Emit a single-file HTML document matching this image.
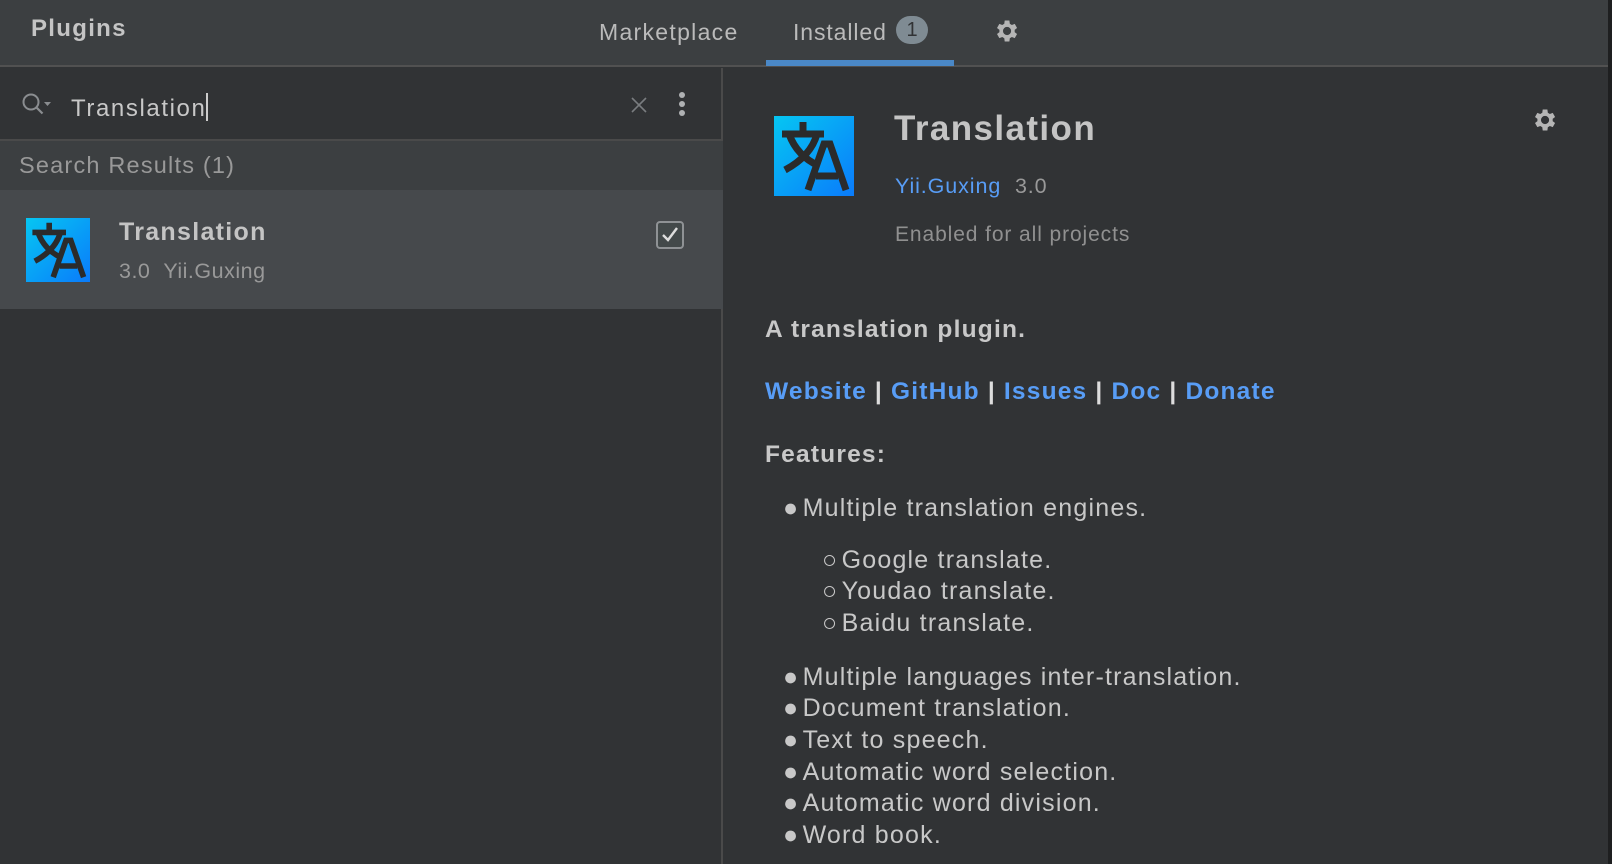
<!DOCTYPE html>
<html><head><meta charset="utf-8"><style>
*{margin:0;padding:0;box-sizing:border-box}
body{width:1612px;height:864px;background:#313335;font-family:"Liberation Sans",sans-serif;color:#bbbbbb;position:relative;overflow:hidden;letter-spacing:0.9px}
.a{position:absolute;white-space:nowrap}
.top{position:absolute;left:0;top:0;width:1612px;height:67px;background:#3c3f41;border-bottom:2px solid #515151}
.left{position:absolute;left:0;top:68px;width:723px;height:796px;background:#313335;border-right:2px solid #4a4a4a}
.b{line-height:1}
</style></head><body>
<div class="top"></div>
<div class="a b" style="left:31px;top:17px;font-size:24px;font-weight:bold;color:#c4c4c4;letter-spacing:1.3px">Plugins</div>
<div class="a b" style="left:599px;top:21px;font-size:23px;color:#bbb;letter-spacing:1.3px">Marketplace</div>
<div class="a b" style="left:793px;top:21px;font-size:23px;color:#bbb">Installed</div>
<div class="a" style="left:896px;top:16px;width:32px;height:28px;border-radius:14px;background:#7f8b93;color:#313335;font-size:20px;text-align:center;line-height:28px;letter-spacing:0">1</div>
<div class="a" style="left:766px;top:60px;width:188px;height:6px;background:#4a88c7"></div>
<svg class="a" style="left:992px;top:17px" width="28" height="28" viewBox="0 0 24 24"><path fill="#b5b5b5" d="M19.4 13a7.5 7.5 0 0 0 0-2l2.1-1.6-2-3.5-2.5 1a7 7 0 0 0-1.7-1L14.9 3h-4l-.4 2.9a7 7 0 0 0-1.7 1l-2.5-1-2 3.5L6.4 11a7.5 7.5 0 0 0 0 2l-2.1 1.6 2 3.5 2.5-1a7 7 0 0 0 1.7 1l.4 2.9h4l.4-2.9a7 7 0 0 0 1.7-1l2.5 1 2-3.5zM12.9 15.5a3.5 3.5 0 1 1 0-7 3.5 3.5 0 0 1 0 7z"/></svg>
<div class="left"></div>
<div class="a" style="left:0;top:139px;width:723px;height:2px;background:#4a4a4a"></div>
<div class="a" style="left:0;top:141px;width:723px;height:49px;background:#3c3f41"></div>
<div class="a" style="left:0;top:190px;width:723px;height:119px;background:#46494c"></div>
<svg class="a" style="left:20px;top:91px" width="36" height="28" viewBox="0 0 36 28"><circle cx="11" cy="11" r="7.5" fill="none" stroke="#8a8d90" stroke-width="2"/><path d="M16.5 16.5l6 6" stroke="#8a8d90" stroke-width="2.2"/><path d="M24 11h7l-3.5 4z" fill="#8a8d90"/></svg>
<div class="a b" style="left:71px;top:93px;font-size:24px;color:#c8c8c8;letter-spacing:1.6px">Translation<span style="display:inline-block;width:2px;height:28px;background:#ccc;vertical-align:-5px;margin-left:0"></span></div>
<svg class="a" style="left:630px;top:96px" width="18" height="18"><path d="M2 2l14 14M16 2L2 16" stroke="#7a7d80" stroke-width="1.6"/></svg>
<div class="a" style="left:679px;top:92px;width:6px;height:6px;border-radius:3px;background:#afb1b3"></div>
<div class="a" style="left:679px;top:101px;width:6px;height:6px;border-radius:3px;background:#afb1b3"></div>
<div class="a" style="left:679px;top:110px;width:6px;height:6px;border-radius:3px;background:#afb1b3"></div>
<div class="a b" style="left:19px;top:154px;font-size:23.5px;color:#999;letter-spacing:1.2px">Search Results (1)</div>
<svg width="0" height="0" style="position:absolute"><defs><linearGradient id="g" x1="0" y1="0" x2="1" y2="1"><stop offset="0" stop-color="#06c6f2"/><stop offset="1" stop-color="#0a7bfb"/></linearGradient></defs></svg>
<svg class="a" style="left:26px;top:218px" width="64" height="64" viewBox="0 0 80 80"><rect width="80" height="80" fill="url(#g)"/><g fill="none" stroke="#2b2b2b" stroke-width="7"><path d="M8 18h42M29 6v12M15 18q8 22 30 32M43 18q-6 22-32 36"/><path d="M34 74l16-46h6l16 46M42 60h22"/></g></svg>
<div class="a b" style="left:119px;top:220px;font-size:25px;font-weight:bold;color:#c4c4c4;letter-spacing:1.3px">Translation</div>
<div class="a b" style="left:119px;top:261px;font-size:21.5px;color:#999;letter-spacing:0.5px">3.0&nbsp;&nbsp;Yii.Guxing</div>
<div class="a" style="left:656px;top:221px;width:28px;height:28px;border:2px solid #8f9295;border-radius:4px;background:#43494a"></div>
<svg class="a" style="left:656px;top:221px" width="28" height="28"><path d="M7 14l5 5 9-12" stroke="#ddd" stroke-width="2.4" fill="none"/></svg>
<svg class="a" style="left:774px;top:116px" width="80" height="80" viewBox="0 0 80 80"><rect width="80" height="80" fill="url(#g)"/><g fill="none" stroke="#2b2b2b" stroke-width="7"><path d="M8 18h42M29 6v12M15 18q8 22 30 32M43 18q-6 22-32 36"/><path d="M34 74l16-46h6l16 46M42 60h22"/></g></svg>
<div class="a b" style="left:894px;top:111px;font-size:35px;font-weight:bold;color:#c4c4c4;letter-spacing:1.4px">Translation</div>
<div class="a b" style="left:895px;top:176px;font-size:21.5px;color:#589df6">Yii.Guxing<span style="color:#999">&nbsp;&nbsp;3.0</span></div>
<div class="a b" style="left:895px;top:224px;font-size:21px;color:#909090">Enabled for all projects</div>
<svg class="a" style="left:1530px;top:106px" width="28" height="28" viewBox="0 0 24 24"><path fill="#b5b5b5" d="M19.4 13a7.5 7.5 0 0 0 0-2l2.1-1.6-2-3.5-2.5 1a7 7 0 0 0-1.7-1L14.9 3h-4l-.4 2.9a7 7 0 0 0-1.7 1l-2.5-1-2 3.5L6.4 11a7.5 7.5 0 0 0 0 2l-2.1 1.6 2 3.5 2.5-1a7 7 0 0 0 1.7 1l.4 2.9h4l.4-2.9a7 7 0 0 0 1.7-1l2.5 1 2-3.5zM12.9 15.5a3.5 3.5 0 1 1 0-7 3.5 3.5 0 0 1 0 7z"/></svg>
<div style="position:absolute;left:765px;top:0;font-size:24.5px;color:#c8c8c8;letter-spacing:1.2px">
<div class="a b" style="left:0;top:318px;font-weight:bold">A translation plugin.</div>
<div class="a b" style="left:0;top:380px;font-weight:bold;color:#ddd"><span style="color:#589df6">Website</span> | <span style="color:#589df6">GitHub</span> | <span style="color:#589df6">Issues</span> | <span style="color:#589df6">Doc</span> | <span style="color:#589df6">Donate</span></div>
<div class="a b" style="left:0;top:443px;font-weight:bold">Features:</div>
</div>
<div style="position:absolute;left:0;top:0;font-size:25px;color:#c8c8c8;letter-spacing:1.2px">
<div class="a b" style="left:783px;top:496px">●&#8202;Multiple translation engines.</div>
<div class="a b" style="left:822px;top:548px">○&#8202;Google translate.</div>
<div class="a b" style="left:822px;top:579px">○&#8202;Youdao translate.</div>
<div class="a b" style="left:822px;top:611px">○&#8202;Baidu translate.</div>
<div class="a b" style="left:783px;top:665px">●&#8202;Multiple languages inter-translation.</div>
<div class="a b" style="left:783px;top:696px">●&#8202;Document translation.</div>
<div class="a b" style="left:783px;top:728px">●&#8202;Text to speech.</div>
<div class="a b" style="left:783px;top:760px">●&#8202;Automatic word selection.</div>
<div class="a b" style="left:783px;top:791px">●&#8202;Automatic word division.</div>
<div class="a b" style="left:783px;top:823px">●&#8202;Word book.</div>
</div>
<div class="a" style="left:1608px;top:0;width:4px;height:864px;background:#1e1f20"></div>
</body></html>
